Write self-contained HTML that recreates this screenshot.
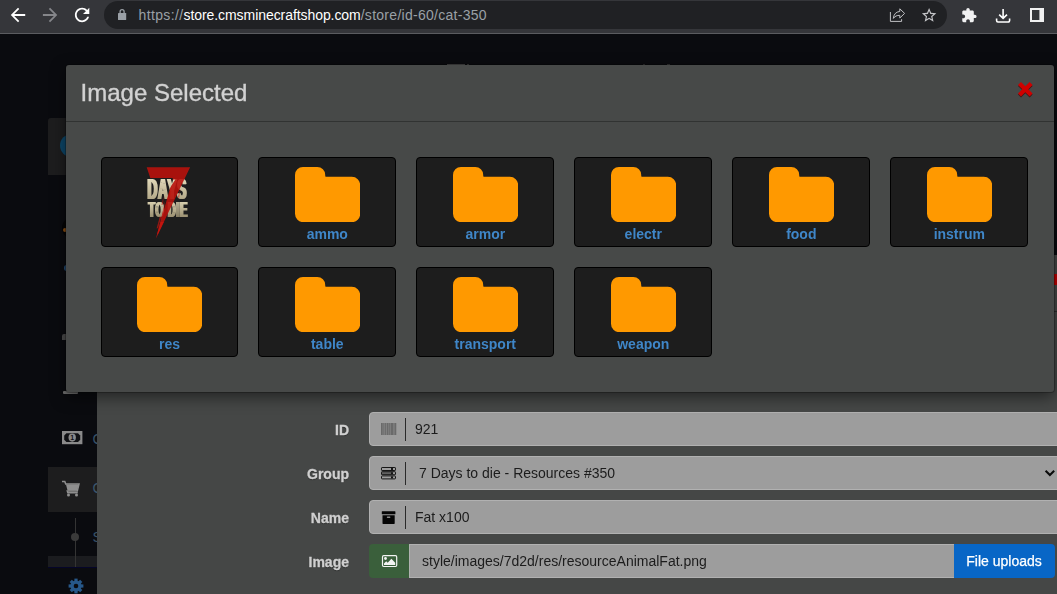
<!DOCTYPE html>
<html lang="en">
<head>
<meta charset="utf-8">
<title>Image Selected</title>
<style>
*{box-sizing:border-box;margin:0;padding:0}
html,body{width:1057px;height:594px;overflow:hidden;background:#0a0b0f;font-family:"Liberation Sans",Arial,sans-serif;font-size:14px;color:#222}
.abs{position:absolute}
/* browser chrome */
#chrome{position:absolute;left:0;top:0;width:1057px;height:34px;background:#35363a;border-bottom:1px solid #5b5c60;z-index:50}
#omni{position:absolute;left:104px;top:1px;width:843px;height:28px;border-radius:14px;background:#202124}
#url{position:absolute;left:138.5px;top:6.3px;font-size:14px;line-height:18px;color:#9aa0a6;white-space:nowrap;letter-spacing:0px}
#url b{font-weight:normal;color:#fff;letter-spacing:-.067px}
#u1{letter-spacing:.37px}
#u3{letter-spacing:.28px}
#chrome svg{position:absolute;overflow:visible}
/* page behind */
#page{position:absolute;left:0;top:34px;width:1057px;height:560px;background:#0a0b0f;overflow:hidden}
#panel{position:absolute;left:97px;top:221px;width:970px;height:500px;background:#454746}
/* modal */
#modal{position:absolute;left:66px;top:65px;width:988px;height:327px;background:#474948;border-radius:3px 3px 3px 3px;box-shadow:0 0 0 1px rgba(0,0,0,.25),0 5px 15px rgba(0,0,0,.5);z-index:20}
#modal h3{position:absolute;left:14.6px;top:14px;font-size:24px;line-height:28px;font-weight:normal;color:#d2d2d2;white-space:nowrap;-webkit-text-stroke:.35px #d2d2d2}
#mhr{position:absolute;left:0;top:56px;width:988px;height:1px;background:#313332}
.it{position:absolute;width:138px;height:90px;background:#1d1d1d;border:1px solid #000;border-radius:4px}
.it svg{position:absolute;left:36px;top:9px;width:65.2px;height:55.2px}
.it span{position:absolute;left:0;width:136.6px;top:68px;text-align:center;font-size:14px;line-height:16px;font-weight:bold;color:#3f86c8}
/* form */
.lbl{position:absolute;width:200px;text-align:right;font-weight:bold;font-size:14px;line-height:16px;color:#d0d0d0;left:149px;margin-top:.9px;text-shadow:0 1px 1px rgba(0,0,0,.35);-webkit-text-stroke:.3px #d0d0d0}
.inp{position:absolute;left:369px;width:700px;height:34px;background:#9d9d9d;border:1px solid #b1b1b1;border-radius:4px}
.inp i{position:absolute;left:35px;top:5px;width:1px;height:23px;background:#2a2a2a}
.inp span{position:absolute;left:45px;top:8px;font-size:14px;line-height:16px;color:#1c1c1c;white-space:nowrap}

.gs{will-change:transform}
#sb i{position:absolute;display:block}
.ico{position:absolute;overflow:visible}
.sbt{position:absolute;left:92.5px;font-size:14px;line-height:16px;color:#486a88;opacity:.75}
</style>
</head>
<body>
<div id="page">
  <div id="sb">
    <i style="left:48px;top:84px;width:49px;height:57px;background:#1d1d1e;border-radius:3px 0 0 0"></i>
    <i style="left:60px;top:100px;width:23px;height:23px;border-radius:50%;background:#0d4668"></i>
    <i style="left:48px;top:433px;width:49px;height:45px;background:#1d1d1e"></i>
    <i style="left:48px;top:522px;width:49px;height:11px;background:#1b1c1f"></i>
    <i style="left:48px;top:533px;width:49px;height:1px;background:#05052a"></i>
    <i style="left:75px;top:484px;width:1px;height:49px;background:#343434"></i>
    <i style="left:71px;top:499px;width:8px;height:8px;border-radius:50%;background:#3a3a3a"></i>
    <svg class="ico" style="left:0;top:0" width="100" height="560" viewBox="0 34 100 560">
      <!-- money -->
      <rect x="62" y="431" width="20.400" height="13.200" fill="#8a8a8a"/>
      <path d="M64.200 435.500l2.200-2.300h11.600l2.200 2.300v4.200l-2.200 2.300H66.400l-2.200-2.300z" fill="#101114"/>
      <ellipse cx="72.200" cy="437.600" rx="3.700" ry="4.100" fill="#8a8a8a"/>
      <text x="72.200" y="440.100" font-family="'Liberation Sans',sans-serif" font-weight="bold" font-size="7" text-anchor="middle" fill="#101114">1</text>
      <!-- cart -->
      <path d="M62 481.500h2.800l.9 2.600h13.300l-1.700 6.900H67.300l.5 1.700h10" stroke="#8f8f8f" stroke-width="1.500" fill="none"/>
      <path d="M66 484.500h12.700l-1.400 6H67.500z" fill="#8f8f8f"/>
      <circle cx="68.500" cy="495" r="1.500" fill="#8f8f8f"/><circle cx="76.500" cy="495" r="1.500" fill="#8f8f8f"/>
      <!-- gear -->
      <g transform="translate(76 586)" fill="#27588a">
        <circle r="5.600"/>
        <rect x="-1.600" y="-7.400" width="3.200" height="14.800"/>
        <rect x="-1.600" y="-7.400" width="3.200" height="14.800" transform="rotate(45)"/>
        <rect x="-1.600" y="-7.400" width="3.200" height="14.800" transform="rotate(90)"/>
        <rect x="-1.600" y="-7.400" width="3.200" height="14.800" transform="rotate(135)"/>
        <circle r="2.300" fill="#0a0b0f"/>
      </g>
    </svg>
    <i style="left:63px;top:357px;width:15px;height:3px;background:#6f6f6f;border-radius:1px"></i>
    <i style="left:62px;top:183px;width:22px;height:22px;border-radius:50%;background:#040405"></i>
    <i style="left:63px;top:194px;width:4px;height:4px;border-radius:50%;background:#8a4e12"></i>
    <i style="left:63.500px;top:231px;width:5px;height:6px;border-radius:50%;background:#234c74"></i>
    <i style="left:62px;top:300px;width:5px;height:6px;background:#4a4a4a;border-radius:2px 0 0 0"></i>
    <span class="sbt" style="top:397px">C</span>
    <span class="sbt" style="top:446px">C</span>
    <span class="sbt" style="top:495px">S</span>
    <i style="left:447px;top:30px;width:18px;height:1px;background:#4e4e4e"></i>
    <i style="left:467px;top:30px;width:2px;height:1px;background:#3e3e3e"></i>
    <i style="left:643px;top:30px;width:2px;height:1px;background:#333"></i>
    <i style="left:667px;top:30px;width:3px;height:1px;background:#3a3a3a"></i>
  </div>
  <div id="panel"><i style="position:absolute;left:955px;top:19px;width:5px;height:11px;background:#c00000;display:block"></i><i style="position:absolute;left:955px;top:56px;width:5px;height:1px;background:#2c2c2c;display:block"></i></div>
</div>

<div id="chrome">
  <div id="omni"></div>
  <div id="url"><span id="u1">https://</span><b id="u2">store.cmsminecraftshop.com</b><span id="u3">/store/id-60/cat-350</span></div>
  <svg id="cicons" width="1057" height="34" viewBox="0 0 1057 34" style="left:0;top:0">
    <!-- back -->
    <path fill="#ffffff" transform="translate(7.2 4.2) scale(.9)" d="M20 11H7.83l5.59-5.59L12 4l-8 8 8 8 1.41-1.41L7.83 13H20v-2z"/>
    <!-- forward -->
    <path fill="#85868a" transform="translate(39.3 4.2) scale(.9)" d="M12 4l-1.41 1.41L16.17 11H4v2h12.17l-5.58 5.59L12 20l8-8z"/>
    <!-- reload -->
    <path fill="#ffffff" transform="translate(71.3 4.2) scale(.9)" d="M17.65 6.35C16.2 4.9 14.21 4 12 4c-4.42 0-7.99 3.58-7.99 8s3.57 8 7.99 8c3.73 0 6.84-2.55 7.73-6h-2.08c-.82 2.33-3.04 4-5.65 4-3.31 0-6-2.69-6-6s2.69-6 6-6c1.66 0 3.14.69 4.22 1.78L13 11h7V4l-2.35 2.350z"/>
    <!-- lock -->
    <rect x="118" y="13" width="8.2" height="7" rx=".6" fill="#9aa0a6"/>
    <path d="M120.1 13.4V11.6a2 2 0 0 1 4 0V13.4" fill="none" stroke="#9aa0a6" stroke-width="1.3"/>
    <!-- share -->
    <path d="M890.4 12V21.4H901.6V19.2" fill="none" stroke="#c0c1c4" stroke-width="1"/>
    <path d="M899.8 8.8L904.6 13.4L899.8 18V15.4C897 15.2 894.8 16.2 893.4 18.4C893.6 14.6 895.8 11.8 899.8 11.4Z" fill="none" stroke="#c0c1c4" stroke-width="1" stroke-linejoin="round"/>
    <!-- star -->
    <path fill="#c4c5c8" transform="translate(920.46 6.6) scale(.72)" d="M22 9.24l-7.19-.62L12 2 9.19 8.63 2 9.24l5.46 4.73L5.82 21 12 17.27 18.18 21l-1.63-7.03L22 9.24zM12 15.4l-3.76 2.27 1-4.28-3.32-2.88 4.38-.38L12 6.1l1.71 4.04 4.38.38-3.32 2.88 1 4.28L12 15.400z"/>
    <!-- puzzle -->
    <path fill="#f1f1f2" transform="translate(960.9 7.2) scale(.68)" d="M20.5 11H19V7c0-1.1-.9-2-2-2h-4V3.5C13 2.12 11.88 1 10.5 1S8 2.12 8 3.5V5H4c-1.1 0-1.99.9-1.99 2v3.8H3.5c1.49 0 2.7 1.21 2.7 2.7s-1.21 2.7-2.7 2.7H2V20c0 1.1.9 2 2 2h3.8v-1.500c0-1.49 1.21-2.7 2.7-2.7 1.49 0 2.7 1.21 2.7 2.7V22H17c1.1 0 2-.9 2-2v-4h1.5c1.38 0 2.5-1.12 2.5-2.5S21.880 11 20.500 11z"/>
    <!-- download -->
    <path d="M1003.1 9V18.2M999.2 14.6L1003.1 18.4L1007 14.6" fill="none" stroke="#ffffff" stroke-width="1.6"/>
    <path d="M996.6 18.4V20.6a1.4 1.400 0 0 0 1.4 1.4H1008.200a1.4 1.400 0 0 0 1.400-1.400V18.400" fill="none" stroke="#ffffff" stroke-width="1.600"/>
    <!-- side panel -->
    <rect x="1031" y="9" width="12" height="12" fill="none" stroke="#f1f1f2" stroke-width="2"/>
    <rect x="1039.400" y="9" width="4" height="12" fill="#f1f1f2"/>
  </svg>
</div>

<div id="form" class="gs">
<div class="lbl" style="top:421px">ID</div>
<div class="inp" style="top:412px"><i></i><span>921</span></div>
<div class="lbl" style="top:465px">Group</div>
<div class="inp" style="top:456px"><i></i><span style="left:49px">7 Days to die - Resources #350</span></div>
<div class="lbl" style="top:509px">Name</div>
<div class="inp" style="top:500px"><i></i><span>Fat x100</span></div>
<div class="lbl" style="top:553px">Image</div>
<div class="inp" style="top:544px;left:409px;width:546px;border-radius:0"><span style="left:12px">style/images/7d2d/res/resourceAnimalFat.png</span></div>
<div class="abs" style="left:369px;top:544px;width:40px;height:34px;background:#3a5f3b;border-radius:4px 0 0 4px"></div>
<div class="abs" id="fup" style="left:954px;top:544px;width:101px;height:34px;background:#0866c6;border-radius:0 4px 4px 0;color:#fff;font-size:14px;line-height:34px;text-align:center;-webkit-text-stroke:.25px #fff;text-indent:-1px">File uploads</div>
<svg class="ico" style="left:0;top:0" width="1057" height="594" viewBox="0 0 1057 594">
  <!-- barcode -->
  <g fill="#6b6b6b">
    <rect x="381" y="423" width="1.600" height="12"/><rect x="383.400" y="423" width=".9" height="12"/><rect x="385" y="423" width=".9" height="12"/>
    <rect x="386.800" y="423" width="1.600" height="12"/><rect x="389.200" y="423" width=".9" height="12"/><rect x="390.800" y="423" width="2.200" height="12"/>
    <rect x="393.600" y="423" width=".9" height="12"/><rect x="395" y="423" width="1.200" height="12"/>
    <rect x="381" y="423" width="15.200" height="12" opacity=".45"/>
  </g>
  <!-- server -->
  <g fill="none" stroke="#161616" stroke-width="1">
    <rect x="381.500" y="467.500" width="14" height="3" rx=".6"/>
    <rect x="381.500" y="471.700" width="14" height="3" rx=".6"/>
    <rect x="381.500" y="475.900" width="14" height="3" rx=".6"/>
  </g>
  <g fill="#161616">
    <rect x="381.500" y="471.700" width="10" height="3" opacity=".45"/>
    <rect x="391" y="468" width="2" height="2"/><rect x="391" y="472.200" width="2" height="2"/><rect x="391" y="476.400" width="2" height="2"/>
  </g>
  <!-- archive -->
  <rect x="381.800" y="511.300" width="13.600" height="3" rx=".4" fill="#050505"/>
  <path d="M382.500 515.200h12.200v8.100a.6 .6 0 0 1-.6 .6h-11a.6 .6 0 0 1-.6-.6z" fill="#050505"/>
  <rect x="386.800" y="516.600" width="3.600" height="1.300" rx=".6" fill="#8a8a8a"/>
  <!-- image icon -->
  <rect x="382.500" y="555.700" width="14.200" height="10.800" rx="1.200" fill="none" stroke="#f3f3f3" stroke-width="1.200"/>
  <circle cx="385.500" cy="558.500" r="1.400" fill="#f3f3f3"/>
  <path d="M384 565v-1.600l2.200-2.200 1.500 1.500 3.700-3.900 3.800 3.900v2.300z" fill="#f3f3f3"/>
  <!-- select chevron -->
  <path d="M1045.600 470.700l4.300 4.300 4.300-4.300" fill="none" stroke="#0a0a0a" stroke-width="2"/>
</svg>
</div>

<div id="modal" class="gs">
  <h3>Image Selected</h3>
  <div id="mhr"></div>
  <svg class="ico" style="left:0;top:0" width="988" height="327" viewBox="66 65 988 327">
    <path d="M1019.500 84.400l11.600 11.600M1031.100 84.400l-11.600 11.600" stroke="#3a0a0a" stroke-width="4.200" fill="none" opacity=".8"/>
    <path d="M1019.500 83.500l11.600 11.600M1031.100 83.500l-11.600 11.600" stroke="#cf0000" stroke-width="4.200" fill="none"/>
  </svg>
</div>
<div id="items" class="gs" style="position:absolute;left:0;top:0;z-index:30">
  <div class="it" style="left:101px;top:157px;width:137px"><svg id="logo" viewBox="102 158 135 88" style="left:0;top:0;width:135px;height:88px">
    <defs>
      <clipPath id="c7"><path d="M146.700 167.200H190.100L155.800 238.700L172.900 177.900H150.300Z"/></clipPath>
      <linearGradient id="gd" gradientUnits="userSpaceOnUse" x1="0" y1="-21" x2="0" y2="0"><stop offset="0" stop-color="#e2dabb"/><stop offset="1" stop-color="#b3a887"/></linearGradient>
      <linearGradient id="gt" gradientUnits="userSpaceOnUse" x1="0" y1="-15" x2="0" y2="0"><stop offset="0" stop-color="#d6cdac"/><stop offset="1" stop-color="#9a8f70"/></linearGradient>
      <linearGradient id="gr" gradientUnits="userSpaceOnUse" x1="0" y1="167" x2="0" y2="239"><stop offset="0" stop-color="#b8120d"/><stop offset=".45" stop-color="#d41a12"/><stop offset="1" stop-color="#a80f0a"/></linearGradient>
      <filter id="fat" filterUnits="userSpaceOnUse" x="140" y="170" width="60" height="60"><feMorphology operator="dilate" radius="0.600 0"/></filter>
    </defs>
    <g font-family="'Liberation Sans',sans-serif" font-weight="bold">
      <g filter="url(#fat)">
        <text x="0" y="0" font-size="30.200" fill="url(#gd)" letter-spacing="1.600" transform="translate(147.500 199.400) scale(.452 1)">DAYS</text>
        <text x="0" y="0" font-size="21.600" fill="url(#gt)" letter-spacing="1.600" transform="translate(148.500 217.300) scale(.486 1)">TO DIE</text>
      </g>
      <g clip-path="url(#c7)" opacity=".9"><text x="0" y="0" font-size="94.900" fill="url(#gr)" stroke="url(#gr)" stroke-width="3" transform="translate(142.400 232.500) scale(.975 1)">7</text></g>
    </g>
    <g fill="#c2150f">
      <path d="M160.500 222L155.800 238.700L163.800 222Z"/>
      <path d="M165.500 199L160.200 222.500L157.400 233L163 214.500Z" opacity=".85"/>
      <path d="M159.800 216.500L156.600 228.500L158.200 228L161.200 217Z" opacity=".7"/>
      <path d="M163.500 196.500L161.400 205L163.200 204.400Z" opacity=".6"/>
      <path d="M171.800 186L167.800 199.500L170 199Z" opacity=".55"/>
      <path d="M180.500 188.500L177.500 198L179.300 197.200Z" opacity=".5"/>
    </g>
  </svg></div>
  <div class="it" style="left:258px;top:157px"><svg viewBox="0 0 66 56" preserveAspectRatio="none"><path fill="#ff9900" d="M8 0H22.600a8 8 0 0 1 8 8V8.800a1.200 1.200 0 0 0 1.200 1.200H57.500a8.500 8.500 0 0 1 8.500 8.500V47.500a8.500 8.500 0 0 1-8.500 8.500H8.500a8.500 8.500 0 0 1-8.500-8.500V8a8 8 0 0 1 8-8z"/></svg><span>ammo</span></div>
  <div class="it" style="left:416px;top:157px"><svg viewBox="0 0 66 56" preserveAspectRatio="none"><path fill="#ff9900" d="M8 0H22.600a8 8 0 0 1 8 8V8.800a1.200 1.200 0 0 0 1.200 1.200H57.500a8.500 8.500 0 0 1 8.500 8.500V47.500a8.500 8.500 0 0 1-8.500 8.500H8.500a8.500 8.500 0 0 1-8.500-8.500V8a8 8 0 0 1 8-8z"/></svg><span>armor</span></div>
  <div class="it" style="left:574px;top:157px"><svg viewBox="0 0 66 56" preserveAspectRatio="none"><path fill="#ff9900" d="M8 0H22.600a8 8 0 0 1 8 8V8.800a1.200 1.200 0 0 0 1.200 1.200H57.500a8.500 8.500 0 0 1 8.500 8.500V47.500a8.500 8.500 0 0 1-8.500 8.500H8.500a8.500 8.500 0 0 1-8.500-8.500V8a8 8 0 0 1 8-8z"/></svg><span>electr</span></div>
  <div class="it" style="left:732px;top:157px"><svg viewBox="0 0 66 56" preserveAspectRatio="none"><path fill="#ff9900" d="M8 0H22.600a8 8 0 0 1 8 8V8.800a1.200 1.200 0 0 0 1.200 1.200H57.500a8.500 8.500 0 0 1 8.500 8.500V47.500a8.500 8.500 0 0 1-8.500 8.500H8.500a8.500 8.500 0 0 1-8.500-8.500V8a8 8 0 0 1 8-8z"/></svg><span>food</span></div>
  <div class="it" style="left:890px;top:157px"><svg viewBox="0 0 66 56" preserveAspectRatio="none"><path fill="#ff9900" d="M8 0H22.600a8 8 0 0 1 8 8V8.800a1.200 1.200 0 0 0 1.200 1.200H57.500a8.500 8.500 0 0 1 8.500 8.500V47.500a8.500 8.500 0 0 1-8.500 8.500H8.500a8.500 8.500 0 0 1-8.500-8.500V8a8 8 0 0 1 8-8z"/></svg><span>instrum</span></div>
  <div class="it" style="left:101px;top:267px;width:137px"><svg viewBox="0 0 66 56" preserveAspectRatio="none" style="left:35px"><path fill="#ff9900" d="M8 0H22.600a8 8 0 0 1 8 8V8.800a1.200 1.200 0 0 0 1.200 1.200H57.500a8.500 8.500 0 0 1 8.500 8.500V47.500a8.500 8.500 0 0 1-8.500 8.500H8.500a8.500 8.500 0 0 1-8.500-8.500V8a8 8 0 0 1 8-8z"/></svg><span style="width:135px">res</span></div>
  <div class="it" style="left:258px;top:267px"><svg viewBox="0 0 66 56" preserveAspectRatio="none"><path fill="#ff9900" d="M8 0H22.600a8 8 0 0 1 8 8V8.800a1.200 1.200 0 0 0 1.200 1.200H57.500a8.500 8.500 0 0 1 8.500 8.500V47.500a8.500 8.500 0 0 1-8.500 8.500H8.500a8.500 8.500 0 0 1-8.500-8.500V8a8 8 0 0 1 8-8z"/></svg><span>table</span></div>
  <div class="it" style="left:416px;top:267px"><svg viewBox="0 0 66 56" preserveAspectRatio="none"><path fill="#ff9900" d="M8 0H22.600a8 8 0 0 1 8 8V8.800a1.200 1.200 0 0 0 1.200 1.200H57.500a8.500 8.500 0 0 1 8.500 8.500V47.500a8.500 8.500 0 0 1-8.500 8.500H8.500a8.500 8.500 0 0 1-8.500-8.500V8a8 8 0 0 1 8-8z"/></svg><span>transport</span></div>
  <div class="it" style="left:574px;top:267px"><svg viewBox="0 0 66 56" preserveAspectRatio="none"><path fill="#ff9900" d="M8 0H22.600a8 8 0 0 1 8 8V8.800a1.200 1.200 0 0 0 1.200 1.200H57.500a8.500 8.500 0 0 1 8.500 8.500V47.500a8.500 8.500 0 0 1-8.500 8.500H8.500a8.500 8.500 0 0 1-8.500-8.500V8a8 8 0 0 1 8-8z"/></svg><span>weapon</span></div>
</div>
</body>
</html>
